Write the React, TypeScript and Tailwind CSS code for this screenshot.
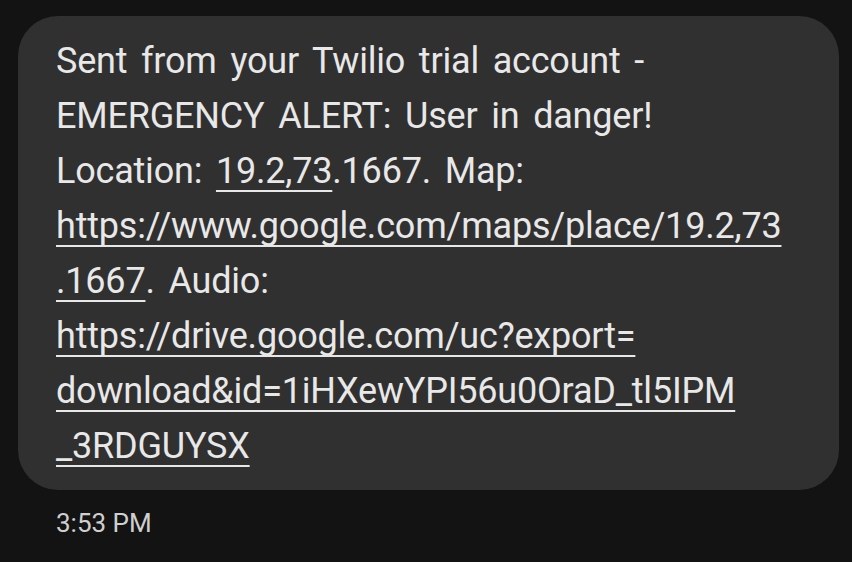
const link = "underline decoration-2 underline-offset-[7px] [text-decoration-skip-ink:none]";

export default function App() {
  return (
    <div className="min-h-[562px] w-[852px] bg-[#131313] pt-4 pl-[18px] font-['Roboto',sans-serif]">
      <div className="w-[821px] rounded-[40px] bg-[#303030] pt-[18px] pb-[16px] pl-[38px] text-[36px] leading-[55px] tracking-[-0.2px] [word-spacing:5px] text-[#e8e8e8]">
        <div>Sent from your Twilio trial account -</div>
        <div>EMERGENCY ALERT: User in danger!</div>
        <div>
          Location: <span className={link}>19.2,73</span>.1667. Map:
        </div>
        <div>
          <span className={link}>https://www.google.com/maps/place/19.2,73</span>
        </div>
        <div>
          <span className={link}>.1667</span>. Audio:
        </div>
        <div>
          <span className={link}>https://drive.google.com/uc?export=</span>
        </div>
        <div>
          <span className={link}>download&amp;id=1iHXewYPI56u0OraD_tl5IPM</span>
        </div>
        <div>
          <span className={link}>_3RDGUYSX</span>
        </div>
      </div>
      <div className="mt-[14px] pl-[38px] text-[26px] text-[#cfcfcf]">3:53 PM</div>
    </div>
  );
}
